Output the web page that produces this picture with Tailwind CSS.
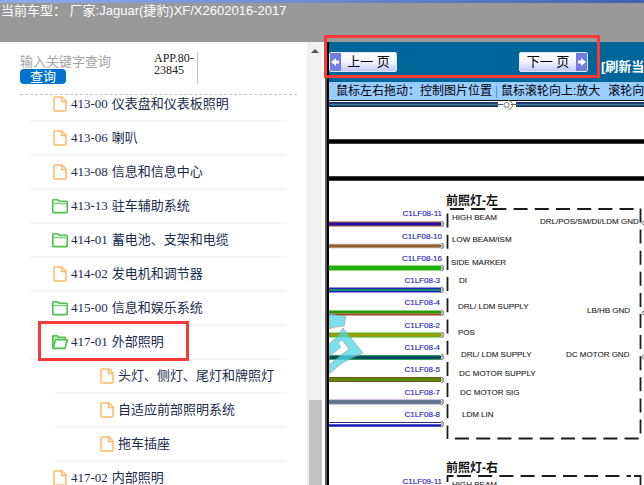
<!DOCTYPE html>
<html lang="zh-CN">
<head>
    <meta charset="UTF-8">
    <meta name="viewport" content="width=device-width, initial-scale=1.0">
    <title>Jaguar(捷豹)XF/X260 电路图</title>
    <script src="https://cdn.jsdelivr.net/npm/@tailwindcss/browser@4"></script>
</head>
<body class="h-screen flex flex-col overflow-hidden bg-white font-['Liberation_Sans','Noto_Sans_CJK_SC',sans-serif]">
    <!-- 图标 -->
    <svg class="hidden">
        <symbol id="icon-doc" viewBox="0 0 16 16">
            <path d="M3.500 1H10l4 4v9a1 1 0 0 1-1 1H3a1 1 0 0 1-1-1V2.500A1.500 1.500 0 0 1 3.500 1z" fill="#fffdfa" stroke="#fbcb90" stroke-width="2"/>
            <path d="M9.500 1v4.500H14" fill="none" stroke="#fbb96e" stroke-width="1.300"/>
        </symbol>
        <symbol id="icon-folder" viewBox="0 0 16 16">
            <path d="M.8 14V2.500a.8.8 0 0 1 .8-.8h4.200l1.400 1.600h7.200a.8.8 0 0 1 .8.8V14a.6.6 0 0 1-.6.6H1.400A.6.6 0 0 1 .8 14z" fill="#fff" stroke="#4fc04f" stroke-width="1.600"/>
            <path d="M1 5.500h14" stroke="#7ccf7c" stroke-width="1.600"/>
        </symbol>
        <symbol id="icon-folder-open" viewBox="0 0 16 16">
            <path d="M.8 14V2.500a.8.8 0 0 1 .8-.8h3.600l1.400 1.600h6a.8.8 0 0 1 .8.8v1.400" fill="#b4e6b4" stroke="#4fc04f" stroke-width="1.600"/>
            <path d="M1 14.400L3.600 5.800h11.800L13.200 13.800a.8.8 0 0 1-.8.6z" fill="#fff" stroke="#4fc04f" stroke-width="1.600"/>
        </symbol>
    </svg>

    <header class="shrink-0 h-[42px] bg-[#999999] text-white">
        <div class="h-[3px] bg-linear-to-r from-[#8faee6] via-[#6a8bd0] to-[#3f62b4]"></div>
        <h1 class="pl-px text-[13px] leading-[16px] whitespace-pre">当前车型： 厂家:Jaguar(捷豹)XF/X2602016-2017</h1>
    </header>

    <div class="flex-1 min-h-0 flex">
        <!-- 左侧目录 -->
        <aside class="w-1/2 shrink-0 flex">
            <div class="flex-1 min-w-0 flex flex-col overflow-hidden">
                <form class="shrink-0 ml-5 mr-[10px] pt-[10px] h-[53px] flex border-b border-dashed border-[#c4c4c4]">
                    <div class="w-[134px] pt-[2px]">
                        <input type="text" aria-label="关键字" placeholder="输入关键字查询" class="block w-full h-[15px] text-[13px] leading-[15px] placeholder:text-[#a3a3a3] outline-none">
                        <button type="button" class="block w-[46px] h-[15px] rounded bg-[#0074cc] text-white text-[13px] leading-[15px]">查询</button>
                    </div>
                    <div class="w-11 h-8 border-r border-[#c4c4c4] font-['Liberation_Serif',serif] text-[12px] leading-[12px] text-[#222222]">APP.80-<br>23845</div>
                </form>
                <nav class="flex-1 min-h-0 overflow-hidden ml-[30px] mr-5 font-['Liberation_Serif','Noto_Sans_CJK_SC',serif] text-[13px] text-[#1b2c4c] whitespace-nowrap">
                    <ul class="-mt-[7px]">
                        <li class="h-[34px] border-b-2 border-[#f5f5f5]"><a href="#" class="h-full pl-[22px] flex items-center gap-[3px]"><svg class="size-4"><use href="#icon-doc"/></svg><span class="flex gap-1"><span>413-00</span><span>仪表盘和仪表板照明</span></span></a></li>
                        <li class="h-[34px] border-b-2 border-[#f5f5f5]"><a href="#" class="h-full pl-[22px] flex items-center gap-[3px]"><svg class="size-4"><use href="#icon-doc"/></svg><span class="flex gap-1"><span>413-06</span><span>喇叭</span></span></a></li>
                        <li class="h-[34px] border-b-2 border-[#f5f5f5]"><a href="#" class="h-full pl-[22px] flex items-center gap-[3px]"><svg class="size-4"><use href="#icon-doc"/></svg><span class="flex gap-1"><span>413-08</span><span>信息和信息中心</span></span></a></li>
                        <li class="h-[34px] border-b-2 border-[#f5f5f5]"><a href="#" class="h-full pl-[22px] flex items-center gap-[3px]"><svg class="size-4"><use href="#icon-folder"/></svg><span class="flex gap-1"><span>413-13</span><span>驻车辅助系统</span></span></a></li>
                        <li class="h-[34px] border-b-2 border-[#f5f5f5]"><a href="#" class="h-full pl-[22px] flex items-center gap-[3px]"><svg class="size-4"><use href="#icon-folder"/></svg><span class="flex gap-1"><span>414-01</span><span>蓄电池、支架和电缆</span></span></a></li>
                        <li class="h-[34px] border-b-2 border-[#f5f5f5]"><a href="#" class="h-full pl-[22px] flex items-center gap-[3px]"><svg class="size-4"><use href="#icon-doc"/></svg><span class="flex gap-1"><span>414-02</span><span>发电机和调节器</span></span></a></li>
                        <li class="h-[34px] border-b-2 border-[#f5f5f5]"><a href="#" class="h-full pl-[22px] flex items-center gap-[3px]"><svg class="size-4"><use href="#icon-folder"/></svg><span class="flex gap-1"><span>415-00</span><span>信息和娱乐系统</span></span></a></li>
                        <li>
                            <div class="relative h-[34px] border-b-2 border-[#f5f5f5]">
                                <a href="#" class="h-full pl-[22px] flex items-center gap-[3px]"><svg class="size-4"><use href="#icon-folder-open"/></svg><span class="flex gap-1"><span>417-01</span><span>外部照明</span></span></a>
                                <div class="absolute -top-[5px] left-2 w-[151px] h-10 border-3 border-[#fb3838] pointer-events-none"></div>
                            </div>
                            <ul class="ml-[25px]">
                                <li class="h-[34px] border-b-2 border-[#f5f5f5]"><a href="#" class="h-full pl-11 flex items-center gap-[3px]"><svg class="size-4"><use href="#icon-doc"/></svg><span>头灯、侧灯、尾灯和牌照灯</span></a></li>
                                <li class="h-[34px] border-b-2 border-[#f5f5f5]"><a href="#" class="h-full pl-11 flex items-center gap-[3px]"><svg class="size-4"><use href="#icon-doc"/></svg><span>自适应前部照明系统</span></a></li>
                                <li class="h-[34px] border-b-2 border-[#f5f5f5]"><a href="#" class="h-full pl-11 flex items-center gap-[3px]"><svg class="size-4"><use href="#icon-doc"/></svg><span>拖车插座</span></a></li>
                            </ul>
                        </li>
                        <li class="h-[34px] border-b-2 border-[#f5f5f5]"><a href="#" class="h-full pl-[22px] flex items-center gap-[3px]"><svg class="size-4"><use href="#icon-doc"/></svg><span class="flex gap-1"><span>417-02</span><span>内部照明</span></span></a></li>
                    </ul>
                </nav>
            </div>
            <!-- 滚动条 -->
            <div class="w-[15px] shrink-0 bg-[#f0f0f0] flex flex-col items-center pt-[7px]">
                <svg class="w-2 h-1" viewBox="0 0 8 4"><path d="M0 4L4 0l4 4z" fill="#505050"/></svg>
                <div class="mt-auto ml-[2px] w-[13px] h-[85px] bg-[#c1c1c1]"></div>
            </div>
        </aside>

        <!-- 右侧电路图 -->
        <main class="relative flex-1 min-w-0 pl-[3px] flex">
            <div class="shrink-0 w-1 border-l-2 border-[#5a5a5a] bg-black"></div>
            <div class="flex-1 min-w-0 flex flex-col overflow-hidden">
                <div class="shrink-0 h-10 bg-[#006699] flex items-center whitespace-nowrap">
                    <button type="button" class="shrink-0 w-[68px] h-5 rounded-xs border border-[#e4e4ff] bg-linear-to-b from-white via-[#f4f4ff] to-[#c4c8f6] flex items-stretch text-[13px] leading-[18px] text-black">
                        <svg class="w-[11px] h-full bg-[#6f7fe2]" viewBox="0 0 11 18"><path d="M1 9l5-4v2.500h3v3H6V13z" fill="#fff"/></svg>
                        <span class="flex-1">上一 页</span>
                    </button>
                    <button type="button" class="shrink-0 ml-[122px] w-[69px] h-5 rounded-xs border border-[#e4e4ff] bg-linear-to-b from-white via-[#f4f4ff] to-[#c4c8f6] flex items-stretch text-[13px] leading-[18px] text-black">
                        <span class="flex-1">下一 页</span>
                        <svg class="w-[11px] h-full bg-[#6f7fe2]" viewBox="0 0 11 18"><path d="M10 9L5 5v2.500H2v3h3V13z" fill="#fff"/></svg>
                    </button>
                    <a href="#" class="ml-[13px] pt-[10px] text-[13px] leading-[16px] font-bold text-white">[刷新当前页]</a>
                </div>
                <div class="shrink-0 h-[18px] pl-[7px] bg-[#99ccff] flex items-center text-[12px] leading-[18px] text-black whitespace-nowrap">
                    <span class="shrink-0">鼠标左右拖动：控制图片位置</span>
                    <span class="shrink-0 w-[9px] text-center text-[#5f86d8]">|</span>
                    <span class="shrink-0">鼠标滚轮向上:放大</span>
                    <span class="shrink-0 ml-2">滚轮向下:缩小</span>
                </div>
                <svg class="shrink-0 w-[600px] h-[600px] font-['Liberation_Sans','Noto_Sans_CJK_SC',sans-serif]" viewBox="329 100 600 600">
                    <!-- 总线 -->
                    <path d="M329 100.500h600" stroke="#111"/>
                    <path d="M329 104.500h169M516 104.500h413" stroke="#1c2d68" stroke-width="5"/>
                    <path d="M329 104.500h169M516 104.500h413" stroke="#3b8794" stroke-width="1.600"/>
                    <path d="M498 104.500h5M511 104.500h5" stroke="#555" stroke-width="1.200"/>
                    <circle cx="506.500" cy="105" r="2.600" fill="#fff" stroke="#777"/>
                    <path d="M508 100.500a4.500 4.500 0 0 1 0 9" fill="none" stroke="#777"/>
                    <path d="M329 141.500h600M329 178.500h600" stroke="#000" stroke-width="4.600"/>

                    <!-- 导线 -->
                    <path d="M329 224h112" stroke="#8b4a50" stroke-width="5"/>
                    <path d="M329 224h112" stroke="#1d0fa8" stroke-width="2.400"/>
                    <path d="M329 246h112" stroke="#b0a8a0" stroke-width="4.600"/>
                    <path d="M329 246h112" stroke="#9a5c28" stroke-width="2.400"/>
                    <path d="M329 268h112" stroke="#1fb008" stroke-width="5"/>
                    <path d="M329 290h112" stroke="#2222b4" stroke-width="5"/>
                    <path d="M329 290h112" stroke="#188a70" stroke-width="2"/>
                    <path d="M329 312h112" stroke="#239a08" stroke-width="3"/>
                    <path d="M329 314.500h112" stroke="#9c4a18" stroke-width="2"/>
                    <path d="M329 335h112" stroke="#55b020" stroke-width="5"/>
                    <path d="M329 335h112" stroke="#98a000" stroke-width="3"/>
                    <path d="M329 357.500h112" stroke="#30a060" stroke-width="5"/>
                    <path d="M329 357.500h112" stroke="#06405c" stroke-width="2.600"/>
                    <path d="M329 379.500h112" stroke="#6c5c18" stroke-width="5"/>
                    <path d="M329 379.500h112" stroke="#5f8a00" stroke-width="3"/>
                    <path d="M329 402h112" stroke="#a080c8" stroke-width="5"/>
                    <path d="M329 402h112" stroke="#627686" stroke-width="3.400"/>
                    <path d="M329 422.500h112" stroke="#2c2c88"/>
                    <path d="M329 425.500h112" stroke="#1818b0" stroke-width="2.600"/>

                    <!-- 水印 -->
                    <g stroke="#8a9498" stroke-width=".8" fill="#4fd6e6" opacity=".75">
                        <path d="M329 313l7 2 10 1-2 10-9 1-6 2z"/>
                        <path fill-rule="evenodd" d="M329 344l9-8 5-8 20 25-21 10-13 11zM329 357l12-10-3-4 4-3 7 9-8 6-12 10z"/>
                    </g>

                    <!-- 端子 -->
                    <g fill="#fff" stroke="#777" stroke-width=".9">
                        <path id="pin" d="M441 221.200a2.800 2.800 0 1 1 0 5.600M443 222.600a1.400 1.400 0 1 0 0 2.800"/>
                        <use href="#pin" y="22"/>
                        <use href="#pin" y="44"/>
                        <use href="#pin" y="66"/>
                        <use href="#pin" y="89"/>
                        <use href="#pin" y="111"/>
                        <use href="#pin" y="133"/>
                        <use href="#pin" y="156"/>
                        <use href="#pin" y="178"/>
                        <use href="#pin" y="200"/>
                        <circle cx="644" cy="223" r="2"/>
                        <circle cx="644" cy="313" r="2"/>
                        <circle cx="644" cy="357" r="2"/>
                    </g>

                    <!-- 模块虚线框 -->
                    <g fill="none" stroke="#1c1c1c" stroke-width="1.800">
                        <path d="M450 209h190" stroke-dasharray="14 7.200"/>
                        <path d="M447.500 213.500V439" stroke-dasharray="14 7.200"/>
                        <path d="M640.500 208.500V434" stroke-dasharray="14 7.100"/>
                        <path d="M455 438.500h185" stroke-dasharray="14 7.200"/>
                        <path d="M447.500 482v-6h6M457 476h174" stroke-dasharray="14 7.200"/>
                        <path d="M634 476h6.500v9"/>
                    </g>

                    <g font-size="12" font-weight="bold" fill="#111">
                        <text x="446" y="205">前照灯-左</text>
                        <text x="446" y="472">前照灯-右</text>
                    </g>

                    <g font-size="8" fill="#2a22c0" stroke="#2a22c0" stroke-width=".15" text-anchor="end">
                        <text x="442" y="216">C1LF08-11</text>
                        <text x="442" y="239">C1LF08-10</text>
                        <text x="442" y="261">C1LF08-16</text>
                        <text x="440" y="283">C1LF08-3</text>
                        <text x="440" y="305">C1LF08-4</text>
                        <text x="440" y="328">C1LF08-2</text>
                        <text x="440" y="350">C1LF08-4</text>
                        <text x="440" y="372">C1LF08-5</text>
                        <text x="440" y="395">C1LF08-7</text>
                        <text x="440" y="417">C1LF08-8</text>
                        <text x="442" y="484">C1LF09-11</text>
                    </g>

                    <g font-size="8" fill="#222" stroke="#222" stroke-width=".1">
                        <text x="452" y="220">HIGH BEAM</text>
                        <text x="452" y="242">LOW BEAM/ISM</text>
                        <text x="451" y="265">SIDE MARKER</text>
                        <text x="459" y="283">DI</text>
                        <text x="458" y="309">DRL/ LDM SUPPLY</text>
                        <text x="458" y="335">POS</text>
                        <text x="461" y="357">DRL/ LDM SUPPLY</text>
                        <text x="459" y="376">DC MOTOR SUPPLY</text>
                        <text x="460" y="395">DC MOTOR SIG</text>
                        <text x="462" y="417">LDM LIN</text>
                        <text x="540" y="224">DRL/POS/SM/DI/LDM GND</text>
                        <text x="587" y="313">LB/HB GND</text>
                        <text x="566" y="357">DC MOTOR GND</text>
                        <text x="452" y="487">HIGH BEAM</text>
                    </g>
                </svg>
            </div>
            <div class="absolute -top-[7px] left-[2px] w-[276px] h-[43px] border-3 border-[#fb3838] pointer-events-none"></div>
        </main>
    </div>
</body>
</html>
